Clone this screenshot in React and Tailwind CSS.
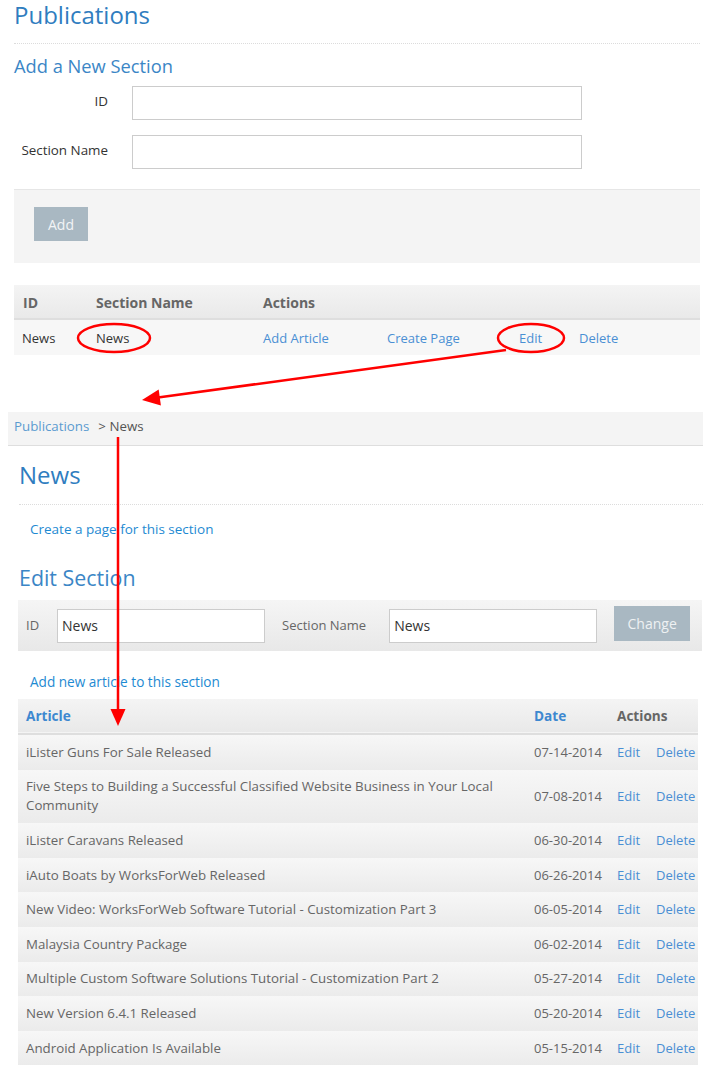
import React from 'react';

const articles = [
    ['iLister Guns For Sale Released', '07-14-2014'],
    ['Five Steps to Building a Successful Classified Website Business in Your Local Community', '07-08-2014'],
    ['iLister Caravans Released', '06-30-2014'],
    ['iAuto Boats by WorksForWeb Released', '06-26-2014'],
    ['New Video: WorksForWeb Software Tutorial - Customization Part 3', '06-05-2014'],
    ['Malaysia Country Package', '06-02-2014'],
    ['Multiple Custom Software Solutions Tutorial - Customization Part 2', '05-27-2014'],
    ['New Version 6.4.1 Released', '05-20-2014'],
    ['Android Application Is Available', '05-15-2014'],
];

// red markup drawn over the two screenshots
const Annotations = () => (
    <svg className="absolute inset-0 pointer-events-none" width="707" height="1067" viewBox="0 0 707 1067">
        <ellipse cx="114" cy="338" rx="36" ry="14" fill="none" stroke="#ff0000" strokeWidth="2.5" />
        <ellipse cx="531" cy="338" rx="33" ry="14" fill="none" stroke="#ff0000" strokeWidth="2.5" />
        <line x1="506" y1="350" x2="158" y2="397.5" stroke="#ff0000" strokeWidth="2.5" />
        <polygon points="142,400 158.7,389.6 160.9,405.4" fill="#ff0000" />
        <line x1="118" y1="437" x2="118" y2="711" stroke="#ff0000" strokeWidth="2.5" />
        <polygon points="118,726 110.5,709 125.5,709" fill="#ff0000" />
    </svg>
);

const App = () => {
    return (
        <div className="relative w-[707px] min-h-[1067px] bg-white font-['Open_Sans',sans-serif] text-[#333]">
            {/* first screenshot */}
            <div className="pl-[14px] pr-[7px]">
                <h1 className="text-[24px] leading-[30px] text-[#2f7dbf]">Publications</h1>
                <div className="mt-[13px] border-t border-dotted border-[#dcdcdc]" />
                <h2 className="mt-[10px] text-[18.3px] leading-[24px] text-[#3b86c6]">Add a New Section</h2>

                <div className="mt-[8px] flex flex-col gap-[15px]">
                    <div className="flex h-[34px] items-center">
                        <label className="w-[94px] pb-[4px] text-right text-[13.4px] text-[#333]">ID</label>
                        <input className="ml-[24px] h-[34px] w-[450px] border border-[#ccc] bg-white" />
                    </div>
                    <div className="flex h-[34px] items-center">
                        <label className="w-[94px] pb-[4px] text-right text-[13.4px] text-[#333]">Section Name</label>
                        <input className="ml-[24px] h-[34px] w-[450px] border border-[#ccc] bg-white" />
                    </div>
                </div>

                <div className="mt-[20px] h-[74px] border-t border-[#e6e6e6] bg-[#f4f4f4] pl-[20px] pt-[17px]">
                    <button className="h-[34px] w-[54px] bg-[#a9b8c2] text-[14px] text-[#f2f4f6]">Add</button>
                </div>

                <div className="mt-[22px]">
                    <div className="grid h-[35px] grid-cols-[73px_167px_1fr] items-center border-b-2 border-[#dedede] bg-gradient-to-b from-[#f4f4f4] to-[#e9e9e9] pt-[1px] text-[14px] font-bold text-[#666]">
                        <span className="pl-[9px]">ID</span>
                        <span className="pl-[9px]">Section Name</span>
                        <span className="pl-[9px]">Actions</span>
                    </div>
                    <div className="grid h-[35px] grid-cols-[73px_167px_124px_132px_60px_1fr] items-center bg-[#f7f7f7] pt-[3px] text-[13px]">
                        <span className="pl-[8px] text-[#333]">News</span>
                        <span className="pl-[9px] text-[#333]">News</span>
                        <a className="pl-[9px] text-[#4a8fd4]">Add Article</a>
                        <a className="pl-[9px] text-[#4a8fd4]">Create Page</a>
                        <a className="pl-[9px] text-[#4a8fd4]">Edit</a>
                        <a className="pl-[9px] text-[#4a8fd4]">Delete</a>
                    </div>
                </div>
            </div>

            {/* second screenshot */}
            <div className="mt-[57px]">
                <div className="ml-[8px] flex h-[34px] w-[695px] items-center border-b border-[#dedede] bg-[#f4f4f4] pb-[3px] pl-[6px] text-[13.3px]">
                    <a className="text-[#5b9bd0]">Publications</a>
                    <span className="ml-[9px] text-[#555]">&gt; News</span>
                </div>

                <div className="pl-[19px] pr-[4px]">
                    <h1 className="mt-[14px] text-[24px] leading-[30px] text-[#2f7dbf]">News</h1>
                    <div className="mt-[14px] border-t border-dotted border-[#dcdcdc]" />
                    <a className="mt-[14px] block pl-[11px] text-[13.5px] leading-[20px] text-[#1e8ad2]">Create a page for this section</a>
                    <h2 className="mt-[26px] text-[21.4px] leading-[26px] text-[#3b86c6]">Edit Section</h2>
                </div>

                <div className="ml-[18px] mt-[9px] flex h-[51px] w-[684px] items-center bg-gradient-to-b from-[#f5f5f5] to-[#e8e8e8] pl-[8px] text-[13px] text-[#666]">
                    <span>ID</span>
                    <input defaultValue="News" className="ml-[18px] h-[34px] w-[208px] border border-[#ccc] bg-white px-[4px] text-[14px] text-[#333]" />
                    <span className="ml-[17px]">Section Name</span>
                    <input defaultValue="News" className="ml-[23px] h-[34px] w-[208px] border border-[#ccc] bg-white px-[4px] text-[14px] text-[#333]" />
                    <button className="ml-[17px] mb-[4px] h-[35px] w-[76px] bg-[#a9b8c2] text-[14px] text-[#eef1f3]">Change</button>
                </div>

                <a className="ml-[30px] mt-[21px] block text-[13.6px] leading-[20px] text-[#1e8ad2]">Add new article to this section</a>

                <table className="ml-[18px] mt-[7px] w-[680px] table-fixed border-collapse text-[13px]">
                    <colgroup>
                        <col className="w-[508px]" />
                        <col className="w-[83px]" />
                        <col />
                    </colgroup>
                    <thead>
                        <tr className="h-[35px] border-b-2 border-[#dedede] bg-gradient-to-b from-[#f4f4f4] to-[#e9e9e9] text-[13.6px] font-bold">
                            <th className="pl-[8px] text-left text-[#3d88d0]">Article</th>
                            <th className="pl-[8px] text-left text-[#3d88d0]">Date</th>
                            <th className="pl-[8px] text-left text-[#666]">Actions</th>
                        </tr>
                    </thead>
                    <tbody>
                        {articles.map(([title, date]) => (
                            <tr key={title} className="bg-gradient-to-b from-[#f7f7f7] to-[#ebebeb]">
                                <td className="py-[7.8px] pl-[8px] pr-[12px] text-[13.3px] leading-[19px] text-[#666]">{title}</td>
                                <td className="pl-[8px] leading-[19px] text-[#666]">{date}</td>
                                <td className="pl-[8px] leading-[19px] whitespace-nowrap">
                                    <a className="text-[#4a8fd4]">Edit</a>
                                    <a className="ml-[16px] text-[#4a8fd4]">Delete</a>
                                </td>
                            </tr>
                        ))}
                    </tbody>
                </table>
            </div>

            <Annotations />
        </div>
    );
};

export default App;
